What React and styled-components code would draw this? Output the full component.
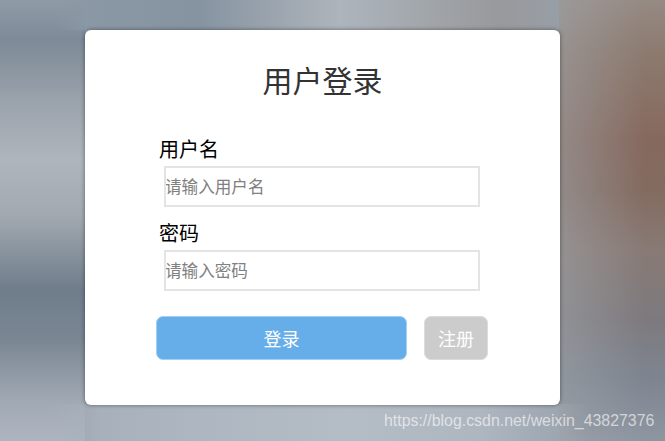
import styled, { createGlobalStyle } from "styled-components";

const GlobalStyle = createGlobalStyle`
  html, body {
    margin: 0;
    padding: 0;
  }
  body {
    font-family: "Noto Sans CJK SC", "Liberation Sans", sans-serif;
  }
  * {
    box-sizing: border-box;
  }
`;

// blurred photo behind the card: strips above and below it, columns either side
const Page = styled.div`
  position: relative;
  width: 665px;
  height: 441px;
  overflow: hidden;
  padding: 30px 0 0 85px;
  background-color: #97a0aa;
  background-repeat: no-repeat;
  background-image:
    linear-gradient(to right, rgba(139, 151, 163, 0) 55px, #8a97a4 90px, #8694a2 200px, #a0a8b1 290px, #adb4bc 340px, #a2a7ac 420px, #98999b 500px, rgba(150, 140, 135, 0) 580px),
    linear-gradient(to right, rgba(160, 170, 180, 0) 50px, #a8b1bb 100px, #aeb7c1 200px, #b4bcc5 350px, #aeb6c0 480px, rgba(165, 172, 182, 0) 590px),
    linear-gradient(to right, rgba(160, 165, 170, 0.55), rgba(160, 165, 170, 0) 85px),
    linear-gradient(to bottom, #968a84 0, #8d7b70 50px, #86695e 140px, #836b60 190px, #887a75 250px, #7d7a7e 320px, #7e8590 380px, #8e96a2 441px),
    linear-gradient(to bottom, #8f9ca8 0, #7d8a97 40px, #9aa2ab 100px, #aeb5bd 160px, #a2a9b1 215px, #6f7d8b 290px, #7a8693 340px, #a0a9b3 400px, #aeb5c0 441px);
  background-size:
    100% 30px,
    100% 37px,
    106px 100%,
    106px 100%,
    85px 100%;
  background-position:
    0 0,
    0 404px,
    559px 0,
    559px 0,
    0 0;
`;

const Card = styled.form`
  width: 475px;
  height: 375px;
  padding: 25px 71px 0;
  background: #fff;
  border-radius: 6px;
  box-shadow: 0 0 4px rgba(0, 0, 0, 0.45);
`;

const Title = styled.h1`
  margin: 0 0 29px;
  font-size: 30px;
  font-weight: 400;
  line-height: 48px;
  text-align: center;
  color: #333;
`;

const Field = styled.div`
  display: flex;
  flex-direction: column;
  margin-bottom: 9px;
`;

const Label = styled.label`
  padding: 0 0 1px 3px;
  font-size: 20px;
  line-height: 33px;
  color: #000;
`;

const Input = styled.input`
  width: 316px;
  height: 41px;
  margin-left: 8px;
  padding: 0 0 2px;
  border: 2px solid #e4e4e4;
  outline: none;
  background: #fff;
  font-family: inherit;
  font-size: 16.6px;
  text-indent: -1px;

  &::placeholder {
    color: #808080;
    opacity: 1;
  }
`;

const Actions = styled.div`
  display: flex;
  gap: 17px;
  margin-top: 25px;
`;

const Button = styled.button`
  width: ${(p) => p.$width}px;
  height: 44px;
  padding: 0;
  border: 1px solid ${(p) => p.$edge};
  border-radius: 7px;
  background: ${(p) => p.$bg};
  color: #fff;
  font-family: inherit;
  font-size: 18px;
`;

const Watermark = styled.span`
  position: absolute;
  left: 384px;
  top: 411px;
  font-family: "Liberation Sans", Arial, sans-serif;
  font-size: 15.9px;
  line-height: 20px;
  color: rgba(255, 255, 255, 0.62);
  white-space: nowrap;
`;

export default function App() {
  return (
    <Page>
      <GlobalStyle />
      <Card>
        <Title>用户登录</Title>
        <Field>
          <Label>用户名</Label>
          <Input placeholder="请输入用户名" />
        </Field>
        <Field>
          <Label>密码</Label>
          <Input placeholder="请输入密码" />
        </Field>
        <Actions>
          <Button type="button" $width={251} $bg="#66aeea" $edge="#a3cff2">登录</Button>
          <Button type="button" $width={64} $bg="#cccccc" $edge="#dcdcdc">注册</Button>
        </Actions>
      </Card>
      <Watermark>https://blog.csdn.net/weixin_43827376</Watermark>
    </Page>
  );
}
